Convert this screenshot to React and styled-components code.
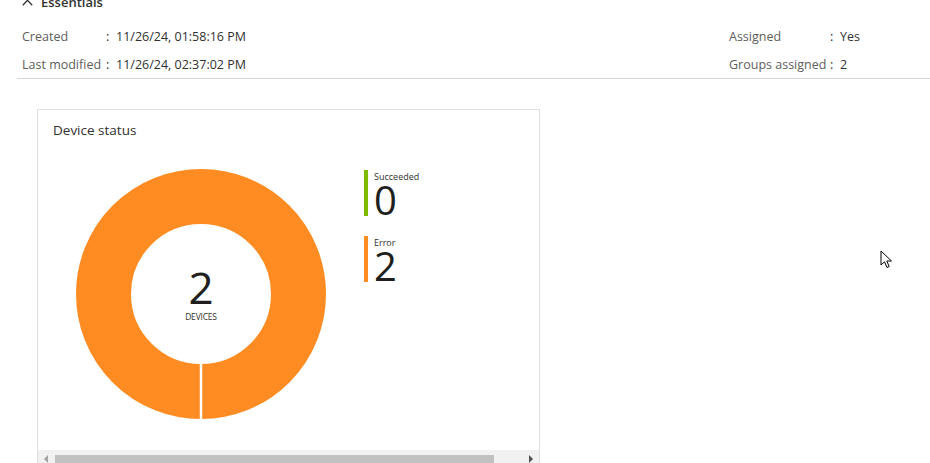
import React from 'react'
import styled, { createGlobalStyle } from 'styled-components'

const GlobalStyle = createGlobalStyle`
  html, body {
    margin: 0;
    padding: 0;
    background: #fff;
    overflow: hidden;
  }
  body {
    font-family: "Open Sans", "Noto Sans", "Liberation Sans", sans-serif;
    color: #323130;
  }
`

const Page = styled.div`
  position: relative;
  width: 930px;
  height: 463px;
  overflow: hidden;
`

const EssentialsHeader = styled.div`
  display: flex;
  align-items: center;
  gap: 8px;
  height: 20px;
  margin-top: -8px;
  padding-left: 22px;
  font-size: 13px;
  font-weight: 600;
  color: #323130;
`

const Essentials = styled.div`
  display: flex;
  justify-content: space-between;
  margin: 0 0 0 17px;
  padding: 10px 0 0 5px;
  border-bottom: 1px solid #d6d6d6;
`

const PropGrid = styled.div`
  display: grid;
  grid-template-columns: ${p => p.$labelWidth}px 10px auto;
  grid-auto-rows: 28px;
  align-items: center;
  width: ${p => p.$width}px;
  font-size: 12.5px;
`

const Label = styled.span`
  color: #605e5c;
`

const Colon = styled.span`
  color: #323130;
`

const Value = styled.span`
  color: #323130;
`

const Card = styled.section`
  margin: 30px 0 0 37px;
  width: 501px;
  border: 1px solid #e1dfdd;
  border-bottom: none;
  background: #fff;
`

const CardTitle = styled.h3`
  margin: 0;
  padding: 11px 15px 0;
  font-size: 13.5px;
  font-weight: 400;
  line-height: 18px;
  color: #323130;
`

const ChartRow = styled.div`
  display: flex;
  align-items: flex-start;
  gap: 38px;
  height: 281px;
  padding: 30px 0 0 38px;
`

const DonutWrap = styled.div`
  position: relative;
  width: 250px;
  height: 250px;
  flex: none;
`

const DonutCenter = styled.div`
  position: absolute;
  inset: 0;
  display: flex;
  flex-direction: column;
  align-items: center;
  justify-content: center;
`

const CenterNumber = styled.div`
  font-size: 44px;
  line-height: 40px;
  color: #201f1e;
`

const CenterCaption = styled.div`
  margin-top: 4px;
  font-size: 8.5px;
  letter-spacing: -0.2px;
  color: #323130;
`

const Legend = styled.div`
  display: flex;
  flex-direction: column;
  gap: 20px;
  padding-top: 1px;
`

const LegendItem = styled.div`
  display: flex;
  flex-direction: column;
  height: 46px;
  border-left: 4px solid ${p => p.$color};
  padding-left: 6px;
`

const LegendLabel = styled.div`
  font-size: 9px;
  line-height: 12px;
  margin-top: 1px;
  color: #323130;
`

const LegendValue = styled.div`
  font-size: 40px;
  line-height: 34px;
  color: #201f1e;
`

const ScrollBar = styled.div`
  display: flex;
  align-items: center;
  height: 17px;
  background: #f1f1f1;
`

const ScrollArrow = styled.div`
  width: 17px;
  height: 17px;
  display: flex;
  align-items: center;
  justify-content: center;
  flex: none;
`

const ScrollTrack = styled.div`
  flex: 1;
  height: 100%;
  display: flex;
  align-items: center;
`

const ScrollThumb = styled.div`
  height: 11px;
  width: 439px;
  background: #c1c1c1;
  margin-top: 4px;
`

const Cursor = styled.svg`
  position: absolute;
  left: 880px;
  top: 250px;
`

const Donut = () => (
  <svg width="250" height="250" viewBox="0 0 250 250">
    <circle cx="125" cy="125" r="97.5" fill="none" stroke="#ff8c23" strokeWidth="55" />
    <line x1="125" y1="194" x2="125" y2="251" stroke="#fff" strokeWidth="2.5" />
  </svg>
)

const App = () => (
  <Page>
    <GlobalStyle />
    <EssentialsHeader>
      <svg width="11" height="7" viewBox="0 0 11 7">
        <path d="M0.8 6.2 L5.5 1.3 L10.2 6.2" fill="none" stroke="#323130" strokeWidth="1.3" />
      </svg>
      Essentials
    </EssentialsHeader>
    <Essentials>
      <PropGrid $labelWidth={84} $width={300}>
        <Label>Created</Label>
        <Colon>:</Colon>
        <Value>11/26/24, 01:58:16 PM</Value>
        <Label>Last modified</Label>
        <Colon>:</Colon>
        <Value>11/26/24, 02:37:02 PM</Value>
      </PropGrid>
      <PropGrid $labelWidth={101} $width={201}>
        <Label>Assigned</Label>
        <Colon>:</Colon>
        <Value>Yes</Value>
        <Label>Groups assigned</Label>
        <Colon>:</Colon>
        <Value>2</Value>
      </PropGrid>
    </Essentials>

    <Card>
      <CardTitle>Device status</CardTitle>
      <ChartRow>
        <DonutWrap>
          <Donut />
          <DonutCenter>
            <CenterNumber>2</CenterNumber>
            <CenterCaption>DEVICES</CenterCaption>
          </DonutCenter>
        </DonutWrap>
        <Legend>
          <LegendItem $color="#7fba00">
            <LegendLabel>Succeeded</LegendLabel>
            <LegendValue>0</LegendValue>
          </LegendItem>
          <LegendItem $color="#ff8c23">
            <LegendLabel>Error</LegendLabel>
            <LegendValue>2</LegendValue>
          </LegendItem>
        </Legend>
      </ChartRow>
      <ScrollBar>
        <ScrollArrow>
          <svg width="5" height="8" viewBox="0 0 5 8"><path d="M4 0 L0 4 L4 8 Z" fill="#a3a3a3" /></svg>
        </ScrollArrow>
        <ScrollTrack>
          <ScrollThumb />
        </ScrollTrack>
        <ScrollArrow>
          <svg width="5" height="8" viewBox="0 0 5 8"><path d="M1 0 L5 4 L1 8 Z" fill="#505050" /></svg>
        </ScrollArrow>
      </ScrollBar>
    </Card>

    <Cursor width="13" height="20" viewBox="0 0 13 20">
      <path d="M1 1 L1 15 L4.5 11.8 L7 17.5 L9.2 16.5 L6.8 11 L11.5 11 Z" fill="#fff" stroke="#000" strokeWidth="1" strokeLinejoin="miter" />
    </Cursor>
  </Page>
)

export default App
